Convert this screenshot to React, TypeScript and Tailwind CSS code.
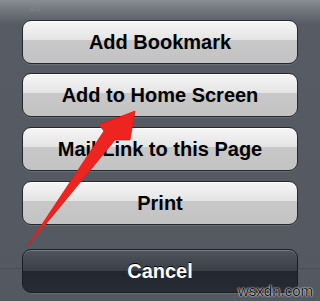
const LIGHT =
  'h-[44px] w-full rounded-[9px] border-[1.5px] border-[#25282d] bg-[linear-gradient(to_bottom,#f6f6f6_0%,#e4e4e4_45%,#c8c8c8_45%,#c3c3c3_100%)] shadow-[inset_0_1px_0_#ffffff,0_1px_0_rgba(255,255,255,0.12)] flex items-center justify-center text-[20px] font-bold text-black';

export default function App() {
  return (
    <div
      className="relative w-[320px] h-[301px] overflow-hidden bg-[linear-gradient(to_bottom,#8a8d93_0px,#6a6e75_14px,#575b63_24px,#545860_100%)]"
      style={{ fontFamily: '"Liberation Sans", Arial, sans-serif' }}
    >
      {/* faint page behind the sheet */}
      <div className="absolute left-[30px] top-[2px] text-[9px] text-[#7f838a]">23</div>
      <div className="absolute left-0 right-0 top-[268px] h-px bg-[#4a4e55]" />

      <div className="relative flex flex-col px-[22px] pt-[20px]">
        <button className={LIGHT}>Add Bookmark</button>
        <button className={LIGHT + ' mt-[9px]'}>Add to Home Screen</button>
        <button className={LIGHT + ' mt-[10px] h-[43px]'}>Mail Link to this Page</button>
        <button className={LIGHT + ' mt-[10px] h-[43px]'}>Print</button>
        <button className="mt-[24px] h-[44px] w-full rounded-[9px] border-[1.5px] border-[#1a1d22] bg-[linear-gradient(to_bottom,#50545d_0%,#3a3e46_50%,#22262e_50%,#272b33_100%)] shadow-[inset_0_1px_0_rgba(255,255,255,0.25),0_1px_0_rgba(255,255,255,0.1)] flex items-center justify-center text-[20px] font-bold text-white [text-shadow:0_-1px_0_#000]">
          Cancel
        </button>
      </div>

      {/* red arrow */}
      <svg className="absolute left-0 top-0" width="320" height="301" viewBox="0 0 320 301">
        <polygon
          points="135,111 99,125 104,131 27,247 115,140 130,140"
          fill="#ee2420"
          stroke="#d81c1a"
          strokeWidth="0.8"
          strokeLinejoin="round"
        />
      </svg>

      <div className="absolute left-[238px] top-[282px] text-[15px] leading-[18px] text-[#111] [text-shadow:0_0_2px_#fff,0_0_1px_#fff]">
        wsxdn.com
      </div>
    </div>
  );
}
